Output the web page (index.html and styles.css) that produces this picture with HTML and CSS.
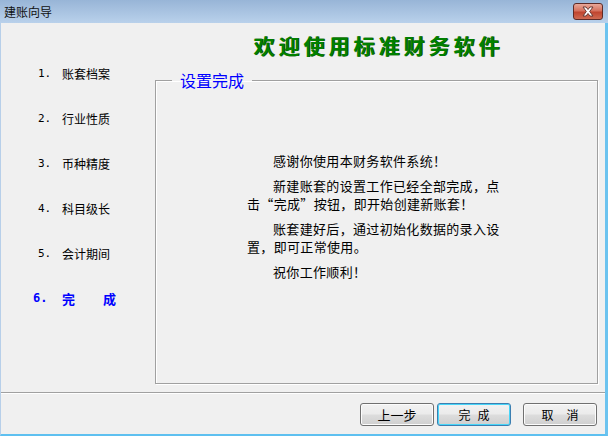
FILE: index.html
```html
<!DOCTYPE html>
<html lang="zh-CN">

<head>
    <meta charset="UTF-8">
    <title>建账向导</title>
    <link rel="stylesheet" href="styles.css">
</head>

<body>
    <div class="window">
        <div class="titlebar">
            <span class="title">建账向导</span>
            <span class="close">
                <svg width="16" height="11" viewBox="0 0 16 11">
                    <path d="M3 1 L6 1 L8 3.5 L10 1 L13 1 L9.7 5.5 L13 10 L10 10 L8 7.5 L6 10 L3 10 L6.3 5.5 Z"
                        fill="#fff" stroke="#6a3a34" stroke-width="1" stroke-linejoin="round" />
                </svg>
            </span>
        </div>

        <div class="frame">
            <div class="main">
                <!-- wizard steps -->
                <ul class="steps">
                    <li class="step"><span class="num">1.</span>账套档案</li>
                    <li class="step"><span class="num">2.</span>行业性质</li>
                    <li class="step"><span class="num">3.</span>币种精度</li>
                    <li class="step"><span class="num">4.</span>科目级长</li>
                    <li class="step"><span class="num">5.</span>会计期间</li>
                    <li class="step current"><span class="num">6.</span><span class="wide">完</span>成</li>
                </ul>

                <div class="panel">
                    <h1 class="welcome">欢迎使用标准财务软件</h1>
                    <fieldset class="group">
                        <legend>设置完成</legend>
                        <div class="message">
                            <p>感谢你使用本财务软件系统！</p>
                            <p>新建账套的设置工作已经全部完成，点<br>击“完成”按钮，即开始创建新账套！</p>
                            <p>账套建好后，通过初始化数据的录入设<br>置，即可正常使用。</p>
                            <p>祝你工作顺利！</p>
                        </div>
                    </fieldset>
                </div>
            </div>

            <div class="buttons">
                <button class="btn prev">上一步</button>
                <button class="btn default"><span class="gap7">完</span>成</button>
                <button class="btn"><span class="gap13">取</span>消</button>
            </div>
        </div>
    </div>
</body>

</html>
```

FILE: styles.css
```css
body {
    margin: 0;
    font-family: "Noto Sans CJK SC", "Liberation Sans", sans-serif;
    font-size: 12px;
    color: #000;
    background: #f0f0f0;
}

.window {
    width: 608px;
    height: 436px;
    display: flex;
    flex-direction: column;
    overflow: hidden;
}

.titlebar {
    height: 23px;
    flex: none;
    position: relative;
    display: flex;
    align-items: center;
    padding-left: 4px;
    background: linear-gradient(#98b5d7, #b9d1eb);
}

.title {
    font-size: 12px;
    color: #111;
}

.close {
    position: absolute;
    top: 3px;
    right: 5px;
    width: 28px;
    height: 15px;
    border: 1px solid #5e2b27;
    border-radius: 3px;
    background: linear-gradient(#e9a899, #d5715d 45%, #c0452f 55%, #cf6a52);
    display: flex;
    align-items: center;
    justify-content: center;
}

.frame {
    flex: 1;
    background: #f0f0f0;
    border-left: 1px solid #b7cfe9;
    border-right: 3px solid #6cc3ef;
    border-bottom: 2px solid #5ec0f0;
    display: flex;
    flex-direction: column;
}

.main {
    height: 369px;
    display: grid;
    grid-template-columns: 154px 1fr;
    border-bottom: 1px solid #a0a0a0;
    box-shadow: 0 1px 0 #fff;
}

.steps {
    list-style: none;
    margin: 0;
    padding: 28px 0 0 37px;
}

.step {
    height: 45px;
    line-height: 45px;
    display: flex;
    white-space: nowrap;
}

.num {
    width: 24px;
    font-family: "DejaVu Sans Mono", monospace;
    font-size: 11px;
}

.step.current {
    color: #0000ff;
    font-weight: bold;
    font-size: 13px;
}

.step.current .num {
    margin-left: -5px;
    width: 29px;
    font-size: 12px;
}

.wide {
    margin-right: 28px;
}

.panel {
    display: flex;
    flex-direction: column;
    width: 443px;
}

.welcome {
    margin: 10px 0 0;
    height: 24px;
    line-height: 24px;
    text-align: center;
    font-size: 21px;
    letter-spacing: 4px;
    padding-left: 4px;
    color: #008000;
    text-shadow: 1px 0 0 #1f4a00;
}

.group {
    margin: 13px 0 0;
    padding: 0;
    height: 314px;
    box-sizing: border-box;
    border: 1px solid #a0a0a0;
    box-shadow: inset 1px 1px 0 #fff, 1px 1px 0 #fff;
}

.group legend {
    margin-left: 16px;
    padding: 0 8px;
    font-size: 16px;
    line-height: 20px;
    color: #0000ff;
}

.message {
    padding: 62px 0 0 91px;
    font-size: 13px;
    letter-spacing: 0.33px;
    line-height: 18px;
    white-space: nowrap;
}

.message p {
    margin: 0 0 7px;
    text-indent: 26px;
}

.buttons {
    display: flex;
    justify-content: flex-end;
    padding: 10px 8px 0 0;
}

.btn {
    width: 74px;
    height: 23px;
    padding: 0;
    font-family: inherit;
    font-size: 12px;
    color: #000;
    border: 1px solid #707070;
    border-radius: 3px;
    background: linear-gradient(#f2f2f2 0%, #ebebeb 48%, #dddddd 52%, #cfcfcf 100%);
    box-shadow: inset 0 0 0 1px #fcfcfc;
}

.btn.prev {
    margin-right: 3px;
    font-size: 13px;
}

.btn.default {
    margin-right: 12px;
    border-color: #3c7fb1;
    box-shadow: inset 0 0 0 1px #48d5f8;
}

.gap7 {
    margin-right: 7px;
}

.gap13 {
    margin-right: 13px;
}
```
